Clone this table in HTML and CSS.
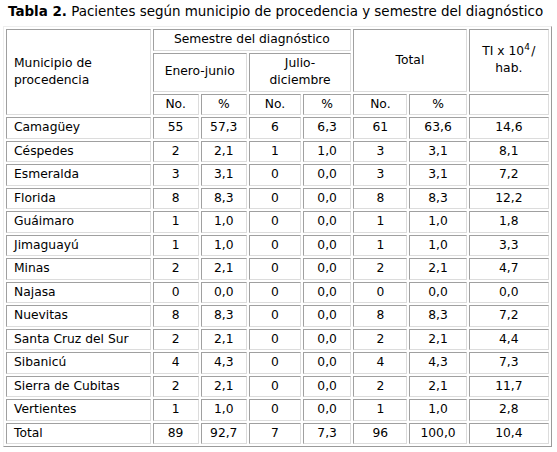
FILE: index.html
```html
<!DOCTYPE html>
<html lang="es">
<head>
<meta charset="utf-8">
<link rel="stylesheet" href="styles.css">
</head>
<body>
<div class="page">
  <p class="caption"><b>Tabla 2.</b> Pacientes según municipio de procedencia y semestre del diagnóstico</p>
  <table class="data">
    <colgroup>
      <col class="c1"><col class="c2"><col class="c3"><col class="c4"><col class="c5"><col class="c6"><col class="c7"><col class="c8">
    </colgroup>
    <thead>
      <tr>
        <td rowspan="3" class="left">Municipio de<br>procedencia</td>
        <td colspan="4">Semestre del diagnóstico</td>
        <td colspan="2" rowspan="2">Total</td>
        <td rowspan="2">TI x 10<sup>4</sup>&#8202;/<br>hab.</td>
      </tr>
      <tr>
        <td colspan="2">Enero-junio</td>
        <td colspan="2">Julio-<br>diciembre</td>
      </tr>
      <tr>
        <td>No.</td><td>%</td><td>No.</td><td>%</td><td>No.</td><td>%</td><td></td>
      </tr>
    </thead>
    <tbody>
      <tr><td class="left">Camagüey</td><td>55</td><td>57,3</td><td>6</td><td>6,3</td><td>61</td><td>63,6</td><td>14,6</td></tr>
      <tr><td class="left">Céspedes</td><td>2</td><td>2,1</td><td>1</td><td>1,0</td><td>3</td><td>3,1</td><td>8,1</td></tr>
      <tr><td class="left">Esmeralda</td><td>3</td><td>3,1</td><td>0</td><td>0,0</td><td>3</td><td>3,1</td><td>7,2</td></tr>
      <tr><td class="left">Florida</td><td>8</td><td>8,3</td><td>0</td><td>0,0</td><td>8</td><td>8,3</td><td>12,2</td></tr>
      <tr><td class="left">Guáimaro</td><td>1</td><td>1,0</td><td>0</td><td>0,0</td><td>1</td><td>1,0</td><td>1,8</td></tr>
      <tr><td class="left">Jimaguayú</td><td>1</td><td>1,0</td><td>0</td><td>0,0</td><td>1</td><td>1,0</td><td>3,3</td></tr>
      <tr><td class="left">Minas</td><td>2</td><td>2,1</td><td>0</td><td>0,0</td><td>2</td><td>2,1</td><td>4,7</td></tr>
      <tr><td class="left">Najasa</td><td>0</td><td>0,0</td><td>0</td><td>0,0</td><td>0</td><td>0,0</td><td>0,0</td></tr>
      <tr><td class="left">Nuevitas</td><td>8</td><td>8,3</td><td>0</td><td>0,0</td><td>8</td><td>8,3</td><td>7,2</td></tr>
      <tr><td class="left">Santa Cruz del Sur</td><td>2</td><td>2,1</td><td>0</td><td>0,0</td><td>2</td><td>2,1</td><td>4,4</td></tr>
      <tr><td class="left">Sibanicú</td><td>4</td><td>4,3</td><td>0</td><td>0,0</td><td>4</td><td>4,3</td><td>7,3</td></tr>
      <tr><td class="left">Sierra de Cubitas</td><td>2</td><td>2,1</td><td>0</td><td>0,0</td><td>2</td><td>2,1</td><td>11,7</td></tr>
      <tr><td class="left">Vertientes</td><td>1</td><td>1,0</td><td>0</td><td>0,0</td><td>1</td><td>1,0</td><td>2,8</td></tr>
      <tr><td class="left">Total</td><td>89</td><td>92,7</td><td>7</td><td>7,3</td><td>96</td><td>100,0</td><td>10,4</td></tr>
    </tbody>
  </table>
</div>
</body>
</html>
```

FILE: styles.css
```css
html, body {
  margin: 0;
  padding: 0;
  background: #ffffff;
}

.page {
  padding: 3px 0 0 3px;
  font-family: "DejaVu Sans", Verdana, sans-serif;
  color: #000000;
}

.caption {
  margin: 0 0 6px 5px;
  font-size: 13.45px;
  line-height: 17px;
  white-space: nowrap;
}

.caption b {
  font-weight: bold;
}

.data {
  table-layout: fixed;
  width: 549px;
  border-collapse: separate;
  border-spacing: 2px;
  border: 1px solid;
  border-color: #eeeeee #9a9a9a #9a9a9a #eeeeee;
  font-size: 12.3px;
  line-height: 17.5px;
}

.data td {
  box-sizing: border-box;
  border: 1px solid;
  border-color: #a0a0a0 #dcdcdc #dcdcdc #a0a0a0;
  padding: 1px 3px;
  text-align: center;
  vertical-align: middle;
}

.data td.left {
  text-align: left;
  padding-left: 7px;
}

.data sup {
  font-size: 9px;
  line-height: 0;
  vertical-align: 5px;
}

.c1 { width: 144px; }
.c2 { width: 46px; }
.c3 { width: 46px; }
.c4 { width: 52px; }
.c5 { width: 48px; }
.c6 { width: 54px; }
.c7 { width: 57px; }
.c8 { width: 80px; }
```
